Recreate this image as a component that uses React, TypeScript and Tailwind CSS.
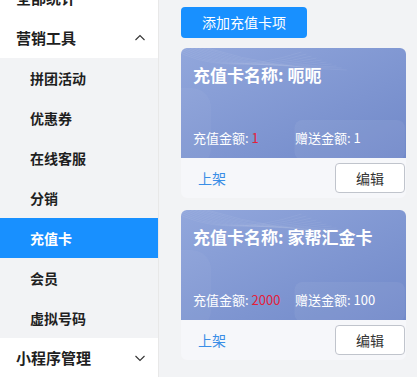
import React from 'react';

const font = { fontFamily: '"Noto Sans CJK SC", "Noto Sans", sans-serif' };

const subItems = ['拼团活动', '优惠券', '在线客服', '分销', '充值卡', '会员', '虚拟号码'];

const cards = [
  { name: '呃呃', amount: '1', gift: '1' },
  { name: '家帮汇金卡', amount: '2000', gift: '100' },
];

const Chevron = ({ up }: { up?: boolean }) => (
  <svg width="12" height="12" viewBox="0 0 12 12" className="text-[#333]">
    <path d={up ? 'M1.5 8 L6 3.5 L10.5 8' : 'M1.5 4 L6 8.5 L10.5 4'} fill="none" stroke="currentColor" strokeWidth="1.1" />
  </svg>
);

const CardArt = () => (
  <svg className="absolute inset-0 w-full h-full" viewBox="0 0 224 110" preserveAspectRatio="none">
    {Array.from({ length: 10 }).map((_, i) => (
      <path key={i} d={`M${-10 + i * 4} 0 Q ${40 + i * 6} ${30 - i} ${120 + i * 5} ${4 + i * 2}`} fill="none" stroke="#ffffff" strokeOpacity="0.08" strokeWidth="0.8" />
    ))}
    <rect x="113" y="72" width="110" height="40" rx="8" fill="#ffffff" fillOpacity="0.06" />
    <rect x="-30" y="40" width="60" height="80" rx="20" fill="#ffffff" fillOpacity="0.04" />
  </svg>
);

export default function App() {
  return (
    <div className="flex w-[417px] h-[377px] overflow-hidden bg-[#f2f3f5]" style={font}>
      <aside className="w-[159px] shrink-0 bg-white border-r border-[#e8e8e8] overflow-hidden">
        <div className="-mt-[22px]">
          <div className="h-10 flex items-center pl-4 text-[15px] font-semibold text-[#1f1f1f]">全部统计</div>
          <div className="h-10 flex items-center justify-between pl-4 pr-[12px] text-[15px] font-semibold text-[#1f1f1f]">
            <span>营销工具</span>
            <Chevron up />
          </div>
          <div className="bg-[#f2f3f5]">
            {subItems.map((s) => (
              <div
                key={s}
                className={`h-10 flex items-center pl-[30px] text-[14px] font-semibold ${s === '充值卡' ? 'bg-[#1890ff] text-white' : 'text-[#1f1f1f]'}`}
              >
                {s}
              </div>
            ))}
          </div>
          <div className="h-10 flex items-center justify-between pl-4 pr-[12px] text-[15px] font-semibold text-[#1f1f1f]">
            <span>小程序管理</span>
            <Chevron />
          </div>
        </div>
      </aside>
      <main className="flex-1 pl-[22px] pr-[11px] pt-[7px]">
        <button className="h-[31px] w-[126px] rounded bg-[#1890ff] text-white text-[14px]">添加充值卡项</button>
        <div className="mt-[10px] flex flex-col gap-3">
          {cards.map((c) => (
            <div key={c.name} className="rounded-md overflow-hidden bg-[#f6f7fa]">
              <div className="relative h-[110px] bg-gradient-to-br from-[#92a7dc] to-[#7189c9] px-3 text-white">
                <CardArt />
                <div className="relative pt-[14px] text-[17px] font-bold">充值卡名称: {c.name}</div>
                <div className="relative mt-[40px] flex text-[13px]">
                  <span className="w-[102px]">
                    充值金额: <span className="text-[#e4203a]">{c.amount}</span>
                  </span>
                  <span>赠送金额: {c.gift}</span>
                </div>
              </div>
              <div className="h-10 flex items-center justify-between pl-[17px] pr-[1px]">
                <span className="text-[14px] text-[#3a8ee6]">上架</span>
                <button className="h-[30px] w-[70px] rounded border border-[#c0c4cc] bg-white text-[14px] text-[#333]">编辑</button>
              </div>
            </div>
          ))}
        </div>
      </main>
    </div>
  );
}
